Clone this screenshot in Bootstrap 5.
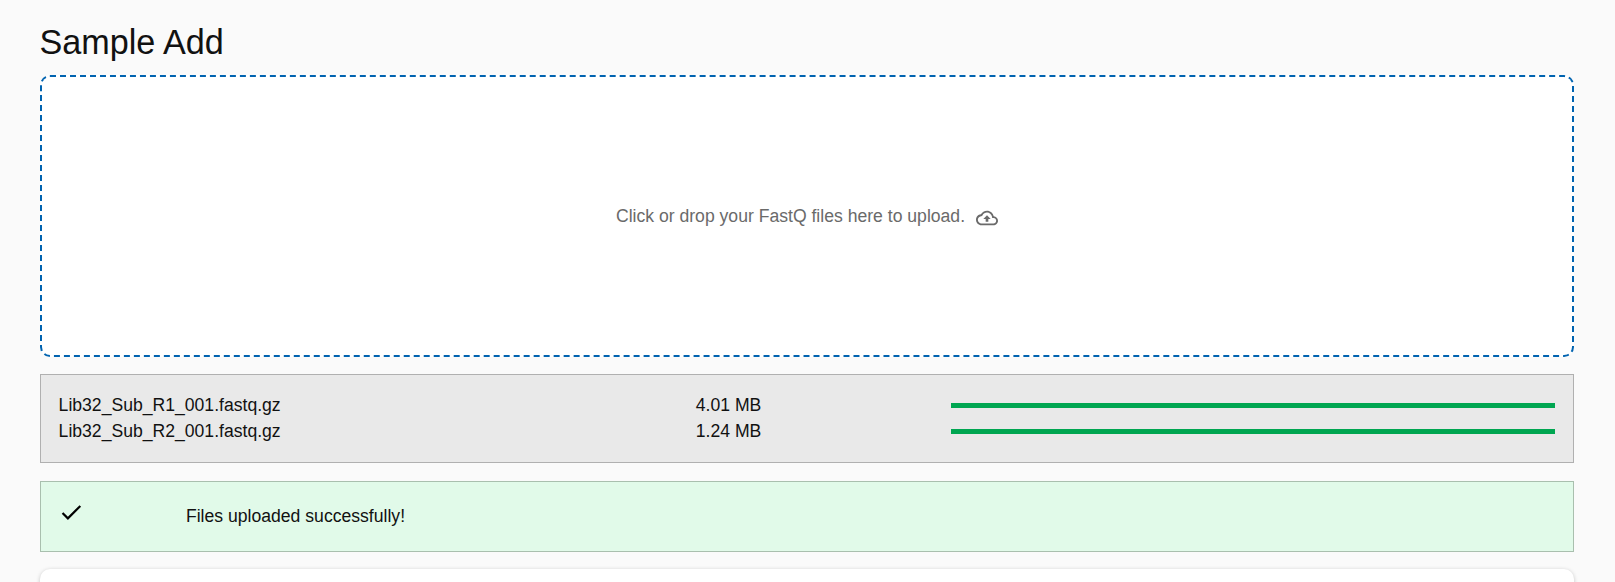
<!DOCTYPE html>
<html lang="en">
<head>
<meta charset="utf-8">
<meta name="viewport" content="width=device-width, initial-scale=1">
<title>Sample Add</title>
<link href="https://cdn.jsdelivr.net/npm/bootstrap@5.3.0/dist/css/bootstrap.min.css" rel="stylesheet">
<style>
  body { background: #fafafa; color: #111; font: 17.6px/26px "Liberation Sans", Arial, sans-serif; overflow: hidden; }
  main { height: 582px; overflow: hidden; padding: 20px 41px 0 40px; }
  h1 { font-size: 34.2px; line-height: 44px; margin: 0 0 11px -0.6px; font-weight: 400; }
  .dropzone { height: 282px; border: 2px dashed #0063b0; border-radius: 10px; background: #fff; color: #6a6a6a; margin-bottom: 17px; }
  .dropzone svg { margin: 4px 0 0 11px; }
  .files { height: 89px; border: 1px solid #b0b0b0; background: #e9e9e9; padding: 17px 18px 0 17.6px; margin-bottom: 18px; }
  .file-name { width: 637.2px; }
  .file-size { width: 255.2px; }
  .progress { height: 5px; border-radius: 0; }
  .progress-bar { background: #00a651; }
  .notice { height: 71px; border: 1px solid #a9bfae; background: #e1fae9; padding-left: 17.2px; margin-bottom: 17px; }
  .notice svg { margin: 17px 101.4px 0 0; }
  .notice p { margin: 21px 0 0; }
  .panel { height: 60px; border-radius: 10px; background: #fff; box-shadow: 0 1px 4px rgba(0,0,0,.22); }
</style>
</head>
<body>
<main>
  <h1>Sample Add</h1>
  <div class="dropzone d-flex align-items-center justify-content-center">
    <span>Click or drop your FastQ files here to upload.</span>
    <svg width="22" height="22" viewBox="0 0 24 24" fill="currentColor" aria-hidden="true"><path d="M19.35 10.04C18.67 6.59 15.64 4 12 4 9.11 4 6.6 5.64 5.35 8.04 2.34 8.36 0 10.91 0 14c0 3.31 2.69 6 6 6h13c2.76 0 5-2.24 5-5 0-2.64-2.05-4.78-4.65-4.96zM19 18H6c-2.21 0-4-1.79-4-4 0-2.05 1.53-3.76 3.56-3.97l1.07-.11.5-.95C8.08 7.14 9.94 6 12 6c2.62 0 4.88 1.86 5.39 4.43l.3 1.5 1.53.11c1.56.1 2.78 1.41 2.78 2.96 0 1.65-1.35 3-3 3zM8 13h2.55v3h2.9v-3H16l-4-4z"/></svg>
  </div>
  <div class="files">
    <div class="d-flex align-items-center">
      <div class="file-name">Lib32_Sub_R1_001.fastq.gz</div>
      <div class="file-size">4.01 MB</div>
      <div class="progress flex-grow-1"><div class="progress-bar w-100"></div></div>
    </div>
    <div class="d-flex align-items-center">
      <div class="file-name">Lib32_Sub_R2_001.fastq.gz</div>
      <div class="file-size">1.24 MB</div>
      <div class="progress flex-grow-1"><div class="progress-bar w-100"></div></div>
    </div>
  </div>
  <div class="notice d-flex align-items-start">
    <svg width="26.4" height="26.4" viewBox="0 0 24 24" fill="#000" aria-hidden="true"><path d="M9 16.17 4.83 12l-1.42 1.41L9 19 21 7l-1.41-1.41z"/></svg>
    <p>Files uploaded successfully!</p>
  </div>
  <div class="panel"></div>
</main>
<script src="https://cdn.jsdelivr.net/npm/bootstrap@5.3.0/dist/js/bootstrap.bundle.min.js"></script>
</body>
</html>
